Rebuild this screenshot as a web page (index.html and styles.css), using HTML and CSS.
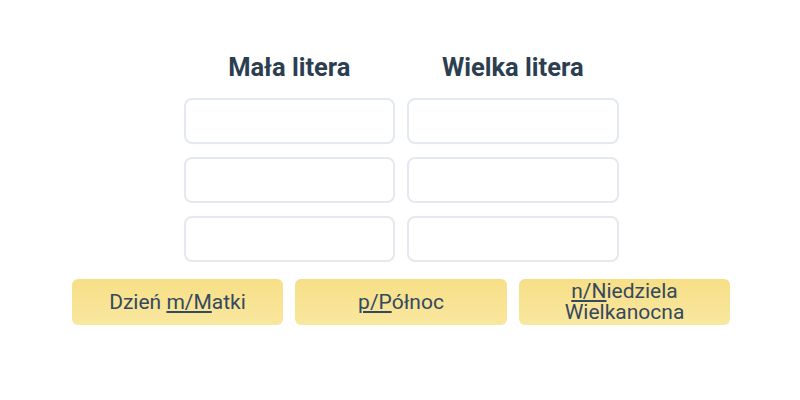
FILE: index.html
```html
<!DOCTYPE html>
<html lang="pl">
<head>
<meta charset="utf-8">
<link rel="stylesheet" href="styles.css">
</head>
<body>
<div class="page">
  <div class="grid">
    <div class="col">
      <h2 class="title">Mała litera</h2>
      <div class="field"></div>
      <div class="field"></div>
      <div class="field"></div>
    </div>
    <div class="col">
      <h2 class="title">Wielka litera</h2>
      <div class="field"></div>
      <div class="field"></div>
      <div class="field"></div>
    </div>
  </div>
  <div class="buttons">
    <button class="btn">Dzień <u>m/M</u>atki</button>
    <button class="btn"><u>p/P</u>ółnoc</button>
    <button class="btn"><u>n/N</u>iedziela Wielkanocna</button>
  </div>
</div>
</body>
</html>
```
FILE: styles.css
```css
* { box-sizing: border-box; }
html, body { margin: 0; padding: 0; background: #fff; }
body { font-family: Roboto, "Noto Sans", sans-serif; color: #2c3e50; }
.page {
  width: 800px;
  height: 400px;
  display: flex;
  flex-direction: column;
  align-items: center;
  padding: 50px 0 0 2px;
}
.grid {
  display: flex;
  gap: 12px;
}
.col {
  width: 211.5px;
  display: flex;
  flex-direction: column;
  gap: 13px;
}
.title {
  margin: 0 0 1px;
  font-size: 25.5px;
  font-weight: 700;
  text-align: center;
  line-height: 34px;
  color: #2c3e50;
}
.field {
  height: 46px;
  border: 2px solid #e3e9ee;
  border-radius: 8px;
  background: #fff;
}
.buttons {
  margin-top: 17px;
  display: flex;
  gap: 12px;
}
.btn {
  width: 211.5px;
  height: 46px;
  border: none;
  border-radius: 6px;
  background: linear-gradient(to bottom, #f7df86, #f9e7a0);
  font-family: Roboto, "Noto Sans", sans-serif;
  font-size: 21px;
  line-height: 21px;
  color: #34495e;
  padding: 0 20px;
  text-align: center;
}
.btn u { text-decoration-thickness: 1.5px; text-underline-offset: 2px; }
```
